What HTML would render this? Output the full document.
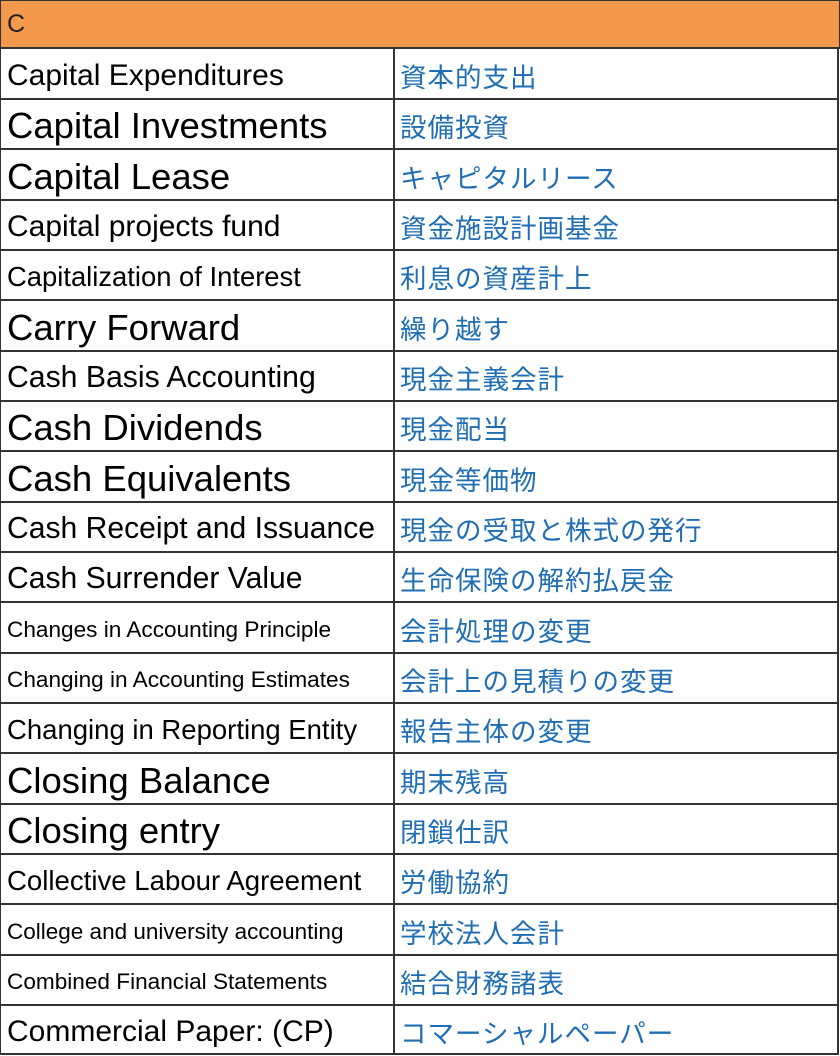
<!DOCTYPE html>
<html><head><meta charset="utf-8"><style>
html,body{margin:0;padding:0;background:#fff;}
body{width:840px;height:1056px;position:relative;overflow:hidden;font-family:"Liberation Sans",Arial,sans-serif;}
.hdr{position:absolute;left:0;top:0;height:49px;background:#f39a4c;border:1px solid #333;border-bottom:2px solid #333;box-sizing:border-box;width:840px;}
.hdr span{position:absolute;left:6px;top:9px;font-size:25px;color:#222;}
.row{position:absolute;left:0;width:839px;border-left:1px solid #333;border-right:2px solid #333;border-bottom:2px solid #333;box-sizing:border-box;}
.en{position:absolute;left:6px;top:4px;bottom:0;display:flex;align-items:center;color:#000;white-space:nowrap;}
.jp{position:absolute;left:392px;top:0;bottom:0;right:0;border-left:2px solid #333;display:flex;align-items:center;padding-left:5px;padding-top:3px;box-sizing:border-box;color:#1f6db3;font-family:"Liberation Sans","Noto Sans CJK JP",sans-serif;font-size:26.5px;letter-spacing:1px;white-space:nowrap;}
</style></head><body>
<div class="hdr"><span>C</span></div>
<div class="row" style="top:49px;height:51px"><div class="en" style="font-size:30px">Capital Expenditures</div><div class="jp">資本的支出</div></div>
<div class="row" style="top:100px;height:50px"><div class="en" style="font-size:36.5px">Capital Investments</div><div class="jp">設備投資</div></div>
<div class="row" style="top:150px;height:51px"><div class="en" style="font-size:36.5px">Capital Lease</div><div class="jp">キャピタルリース</div></div>
<div class="row" style="top:201px;height:50px"><div class="en" style="font-size:30px">Capital projects fund</div><div class="jp">資金施設計画基金</div></div>
<div class="row" style="top:251px;height:50px"><div class="en" style="font-size:27.4px">Capitalization of Interest</div><div class="jp">利息の資産計上</div></div>
<div class="row" style="top:301px;height:51px"><div class="en" style="font-size:36.5px">Carry Forward</div><div class="jp">繰り越す</div></div>
<div class="row" style="top:352px;height:50px"><div class="en" style="font-size:30.2px">Cash Basis Accounting</div><div class="jp">現金主義会計</div></div>
<div class="row" style="top:402px;height:50px"><div class="en" style="font-size:36.5px">Cash Dividends</div><div class="jp">現金配当</div></div>
<div class="row" style="top:452px;height:51px"><div class="en" style="font-size:36.5px">Cash Equivalents</div><div class="jp">現金等価物</div></div>
<div class="row" style="top:503px;height:50px"><div class="en" style="font-size:30.1px">Cash Receipt and Issuance</div><div class="jp">現金の受取と株式の発行</div></div>
<div class="row" style="top:553px;height:50px"><div class="en" style="font-size:30.1px">Cash Surrender Value</div><div class="jp">生命保険の解約払戻金</div></div>
<div class="row" style="top:603px;height:51px"><div class="en" style="font-size:22.6px">Changes in Accounting Principle</div><div class="jp">会計処理の変更</div></div>
<div class="row" style="top:654px;height:50px"><div class="en" style="font-size:22.6px">Changing in Accounting Estimates</div><div class="jp">会計上の見積りの変更</div></div>
<div class="row" style="top:704px;height:50px"><div class="en" style="font-size:27.5px">Changing in Reporting Entity</div><div class="jp">報告主体の変更</div></div>
<div class="row" style="top:754px;height:51px"><div class="en" style="font-size:36.5px">Closing Balance</div><div class="jp">期末残高</div></div>
<div class="row" style="top:805px;height:50px"><div class="en" style="font-size:36.5px">Closing entry</div><div class="jp">閉鎖仕訳</div></div>
<div class="row" style="top:855px;height:50px"><div class="en" style="font-size:27.6px">Collective Labour Agreement</div><div class="jp">労働協約</div></div>
<div class="row" style="top:905px;height:51px"><div class="en" style="font-size:22.5px">College and university accounting</div><div class="jp">学校法人会計</div></div>
<div class="row" style="top:956px;height:50px"><div class="en" style="font-size:22.6px">Combined Financial Statements</div><div class="jp">結合財務諸表</div></div>
<div class="row" style="top:1006px;height:49px"><div class="en" style="font-size:30px">Commercial Paper: (CP)</div><div class="jp">コマーシャルペーパー</div></div>
</body></html>
